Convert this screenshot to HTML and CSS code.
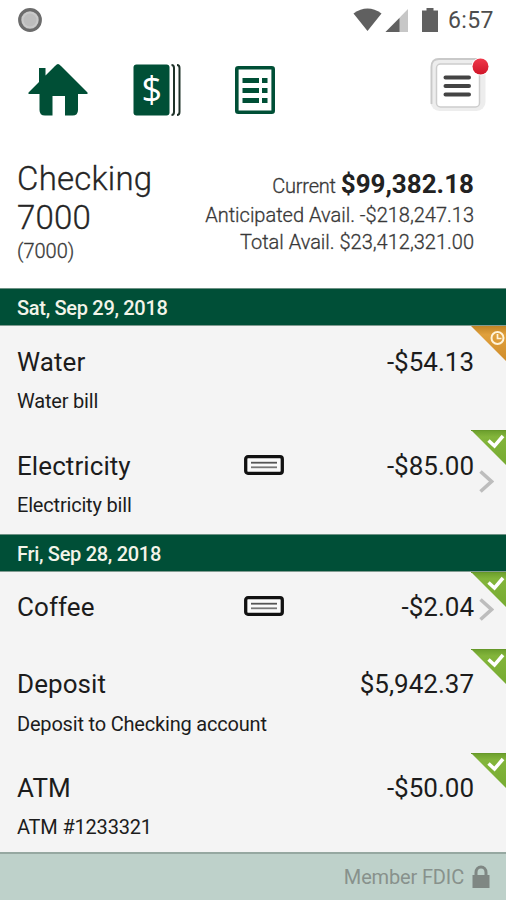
FILE: index.html
```
<!DOCTYPE html>
<html lang="en">
<head>
<meta charset="utf-8">
<title>Checking 7000</title>
<link rel="stylesheet" href="styles.css">
</head>
<body>
<svg class="defs" width="0" height="0">
  <defs>
    <linearGradient id="green" x1="0" y1="0" x2="0" y2="1"><stop offset="0" stop-color="#6a9d2b"/><stop offset=".2" stop-color="#83b53b"/><stop offset="1" stop-color="#76ab31"/></linearGradient>
    <linearGradient id="orange" x1="0" y1="0" x2="0" y2="1"><stop offset="0" stop-color="#c18425"/><stop offset=".25" stop-color="#e0a03c"/><stop offset="1" stop-color="#cf8c2a"/></linearGradient>
    <linearGradient id="red" x1="0" y1="0" x2="0" y2="1"><stop offset="0" stop-color="#f0384a"/><stop offset="1" stop-color="#cf1528"/></linearGradient>
    <symbol id="done" viewBox="0 0 35 35"><path d="M0 0H35V35Z" fill="url(#green)"/><path d="M0 .5H35" stroke="#669829"/><path d="M17.500 10.500l6 5.500 8.500-10" fill="none" stroke="#fff" stroke-width="3.500"/></symbol>
    <symbol id="pending" viewBox="0 0 35 35"><path d="M0 0H35V35Z" fill="url(#orange)"/><circle cx="26.500" cy="12" r="6" fill="none" stroke="#fff3d8" stroke-width="2"/><path d="M26.500 8v4.500h4" fill="none" stroke="#fff3d8" stroke-width="1.700"/></symbol>
    <symbol id="check" viewBox="0 0 40 20"><rect x="1.700" y="1.700" width="36.600" height="16.600" rx="2.300" fill="#fafafa" stroke="#111" stroke-width="3.300"/><path d="M7 7.700h26" stroke="#555" stroke-width="1.800"/><path d="M7 12.300h26" stroke="#777" stroke-width="1.800"/></symbol>
    <symbol id="more" viewBox="0 0 15 23"><path d="M1.500 1.500L12.500 11.500 1.500 21.500" fill="none" stroke="#bdbdbd" stroke-width="3.600"/></symbol>
  </defs>
</svg>
<div class="status">
  <svg class="record" width="26" height="26" viewBox="0 0 26 26"><circle cx="13" cy="13" r="10.300" fill="#c9c9c9" stroke="#6c6c6c" stroke-width="3.200"/><circle cx="13" cy="13" r="6.500" fill="#bdbdbd"/></svg>
  <svg class="signals" width="90" height="28" viewBox="0 0 90 28"><path d="M1.500 6.500Q15.500-3.500 29.500 6.500L15.500 24Z" fill="#606060"/><path d="M33.500 25L56 2V25Z" fill="#c7c7c7"/><path d="M33.500 25L47.500 11V25Z" fill="#606060"/><path d="M70 3.500h4.500V1h7v2.500H86V25H70Z" fill="#606060"/></svg>
  <span class="time">6:57</span>
</div>
<nav class="nav">
  <svg class="home" width="60" height="54" viewBox="0 0 60 54"><path d="M30 1Q31 1 33 3L59.500 29.500V31H50V47Q50 52.500 44.500 52.500H37V33H24.500V52.500H17Q11.500 52.500 11.500 47V31H.5V29.500L11 19V5H17.500V12.500L27 3Q29 1 30 1Z" fill="#004f36"/></svg>
  <svg class="bills" width="48" height="52" viewBox="0 0 48 52"><rect x=".5" y=".5" width="36" height="51" rx="3" fill="#004f36"/><path d="M38.500 1Q41 1 41 4V48Q41 51 38.500 51M44 1Q46.500 1 46.500 4V48Q46.500 51 44 51" fill="none" stroke="#1e3229" stroke-width="2"/><text x="18.800" y="38" text-anchor="middle" class="dollar">$</text></svg>
  <svg class="list" width="40" height="48" viewBox="0 0 40 48"><rect x="1.800" y="1.800" width="36.400" height="44.400" rx="1.500" fill="#fff" stroke="#004f36" stroke-width="3.600"/><path d="M7.500 14.500H24M7.500 24.500H24M7.500 34.500H24M27 14.500h5.500M27 24.500h5.500M27 34.500h5.500" stroke="#004f36" stroke-width="5"/></svg>
  <svg class="menu" width="62" height="56" viewBox="0 0 62 56"><rect x="2.500" y="1" width="55" height="53" rx="9" fill="#ededed"/><path d="M3.500 47V10Q3.500 2 11 2H49" fill="none" stroke="#c9c9c9" stroke-width="1.800"/><rect x="8.500" y="7" width="43" height="43" rx="4" fill="#fff" stroke="#cdcdcd" stroke-width="1.500"/><path d="M17.500 20.500H41M17.500 29H41M17.500 37.500H41" stroke="#444" stroke-width="4" stroke-linecap="round"/><circle cx="52.500" cy="9.500" r="9" fill="#fff"/><circle cx="52.500" cy="9.500" r="8" fill="url(#red)"/></svg>
</nav>
<section class="account">
  <div class="name"><h1>Checking<br>7000</h1><p>(7000)</p></div>
  <div class="balances">
    <p class="current"><span>Current</span> <strong>$99,382.18</strong></p>
    <p class="anticipated">Anticipated Avail. -$218,247.13</p>
    <p class="total">Total Avail. $23,412,321.00</p>
  </div>
</section>
<main>
  <h2 class="first"><span>Sat, Sep 29, 2018</span></h2>
  <article class="row water"><div class="top"><h3>Water</h3><b>-$54.13</b></div><p>Water bill</p><svg class="flag"><use href="#pending"/></svg></article>
  <article class="row electricity"><div class="top"><h3>Electricity</h3><svg class="slip"><use href="#check"/></svg><b>-$85.00</b></div><p>Electricity bill</p><svg class="flag"><use href="#done"/></svg><svg class="more"><use href="#more"/></svg></article>
  <h2 class="second"><span>Fri, Sep 28, 2018</span></h2>
  <article class="row coffee"><div class="top"><h3>Coffee</h3><svg class="slip"><use href="#check"/></svg><b>-$2.04</b></div><svg class="flag"><use href="#done"/></svg><svg class="more"><use href="#more"/></svg></article>
  <article class="row deposit"><div class="top"><h3>Deposit</h3><b>$5,942.37</b></div><p>Deposit to Checking account</p><svg class="flag"><use href="#done"/></svg></article>
  <article class="row atm"><div class="top"><h3>ATM</h3><b>-$50.00</b></div><p>ATM #1233321</p><svg class="flag"><use href="#done"/></svg></article>
</main>
<footer><span>Member FDIC</span><svg width="18" height="24" viewBox="0 0 18 24"><rect x=".5" y="10" width="17" height="13" fill="#7f8783"/><path d="M4 11V7.500a5 5.500 0 0 1 10 0V11" fill="none" stroke="#7f8783" stroke-width="3"/></svg></footer>
</body>
</html>
```
FILE: styles.css
```
* { box-sizing: border-box; margin: 0; padding: 0; }
body { width: 506px; height: 900px; overflow: hidden; background: #fff; color: #1c1c1c; font-family: Roboto, sans-serif; display: flex; flex-direction: column; }
.defs { position: absolute; }
svg { display: block; flex: none; }
.status { height: 40px; display: flex; align-items: flex-start; padding: 7px 12px 0 17px; color: #4d4d4d; }
.signals { margin: 0 0 0 auto; }
.time { width: 46px; margin-left: 6px; font-size: 23px; line-height: 28px; letter-spacing: .4px; white-space: nowrap; }
.nav { height: 100px; display: flex; align-items: flex-start; padding: 24px 16px 0 28px; }
.home { margin-top: -1px; }
.bills { margin-left: 45px; }
.list { margin: 2px 0 0 54px; }
.menu { margin: -7px 0 0 auto; }
.dollar { font: 36px "Open Sans", sans-serif; fill: #fff; }
.account { height: 148px; display: flex; justify-content: space-between; padding: 20px 32px 0 17px; font-weight: 300; -webkit-text-stroke: .3px currentColor; }
.name h1 { font-size: 33px; line-height: 38.5px; font-weight: 300; color: #252525; letter-spacing: .2px; }
.name p { font-size: 20px; line-height: 24px; margin-top: 2px; color: #383838; }
.balances { text-align: right; color: #383838; font-size: 20px; padding-top: 9px; white-space: nowrap; }
.balances p { line-height: 27px; }
.balances .current span { letter-spacing: -.2px; }
.current strong { font-size: 26px; font-weight: 700; color: #222; -webkit-text-stroke: 0; }
.balances .current { line-height: 31px; }
h2 { height: 38px; background: #004f37; border-top: 1px solid #6d9184; border-bottom: 1px solid #819b91; color: #f3f4e9; font-size: 20px; line-height: 39px; font-weight: 500; letter-spacing: -.3px; padding-left: 17px; }
.row { position: relative; background: #f4f4f4; padding: 20px 32px 0 17px; height: 103.5px; }
.top { display: flex; align-items: center; height: 32px; }
h3, .top b { font-size: 26px; line-height: 32px; font-weight: 400; }
h3 { width: 227px; letter-spacing: .08px; }
.top b { margin-left: auto; }
.row p { font-size: 20px; line-height: 24px; margin-top: 11px; letter-spacing: -.19px; }
.slip { width: 40px; height: 20px; margin-top: -3px; }
.flag { position: absolute; right: 0; top: 0; width: 35px; height: 35px; }
.more { position: absolute; right: 12px; top: 40px; width: 15px; height: 23px; }
.water { height: 104px; }
.coffee { height: 77px; }
.coffee .more { top: 26px; }
.deposit { height: 104px; }
.deposit p { margin-top: 12px; }
.atm { height: 99px; }
.coffee, .deposit, .atm { padding-top: 19.5px; }
footer { flex: 1; background: #bed1ca; border-top: 2px solid #96a8a1; display: flex; align-items: center; justify-content: flex-end; padding-right: 16px; gap: 8px; color: #88918c; font-size: 20px; letter-spacing: -.15px; }
```
